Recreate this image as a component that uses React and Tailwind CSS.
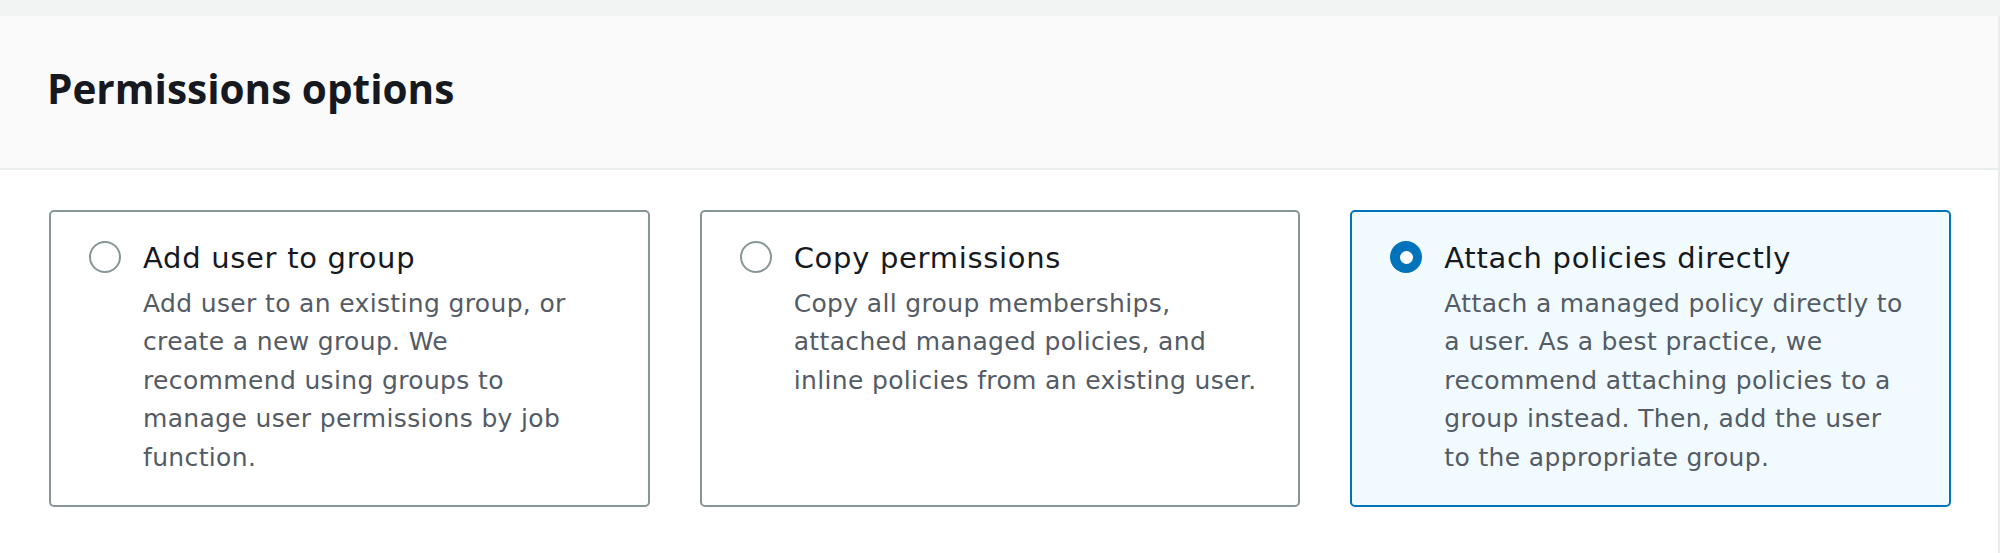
const options = [
  {
    id: "group",
    title: "Add user to group",
    lines: [
      "Add user to an existing group, or",
      "create a new group. We",
      "recommend using groups to",
      "manage user permissions by job",
      "function.",
    ],
  },
  {
    id: "copy",
    title: "Copy permissions",
    lines: [
      "Copy all group memberships,",
      "attached managed policies, and",
      "inline policies from an existing user.",
    ],
  },
  {
    id: "attach",
    title: "Attach policies directly",
    lines: [
      "Attach a managed policy directly to",
      "a user. As a best practice, we",
      "recommend attaching policies to a",
      "group instead. Then, add the user",
      "to the appropriate group.",
    ],
  },
]

function Radio({ checked }) {
  if (checked) {
    return (
      <span className="flex h-[32px] w-[32px] shrink-0 items-center justify-center rounded-full bg-[#0073bb]">
        <span className="block h-[13px] w-[13px] rounded-full bg-white" />
      </span>
    )
  }
  return <span className="block h-[32px] w-[32px] shrink-0 rounded-full border-2 border-[#879596] bg-white" />
}

function OptionCard({ option, selected }) {
  return (
    <div
      className={`flex items-start gap-[22px] rounded-[5px] border-2 pl-[38px] pr-[20px] pt-[24px] pb-[28px] ${
        selected ? "border-[#0073bb] bg-[#f1faff]" : "border-[#879596] bg-white"
      }`}
      style={{ fontFamily: '"DejaVu Sans", "Open Sans", sans-serif' }}
    >
      <div className="mt-[5px] shrink-0">
        <Radio checked={selected} />
      </div>
      <div>
        <p className="text-[29px] leading-[44px] tracking-[0.7px] text-[#16191f]">{option.title}</p>
        <p className="mt-[5px] text-[25px] leading-[38.4px] tracking-[0.35px] text-[#545b64]">
          {option.lines.map((line, i) => (
            <span key={i} className="block whitespace-nowrap">{line}</span>
          ))}
        </p>
      </div>
    </div>
  )
}

export default function App() {
  const selected = "attach"

  return (
    <div className="min-h-[553px] w-full bg-white" style={{ fontFamily: '"Open Sans", "Noto Sans", sans-serif' }}>
      <div className="h-[16px] bg-[#f2f3f3]" />
      <div className="border-r-2 border-[#e9ebed] min-h-[537px]">

        {/* Header */}
        <div className="h-[154px] border-b-2 border-[#eaeded] bg-[#fafafa] pl-[47px] pt-[48px]">
          <h2 className="text-[40.5px] font-bold leading-[49px] text-[#16191f]">Permissions options</h2>
        </div>

        {/* Options */}
        <div className="grid grid-cols-3 gap-[50px] pl-[49px] pr-[47px] pt-[40px]">
          {options.map(option => (
            <OptionCard key={option.id} option={option} selected={option.id === selected} />
          ))}
        </div>

      </div>
    </div>
  )
}
